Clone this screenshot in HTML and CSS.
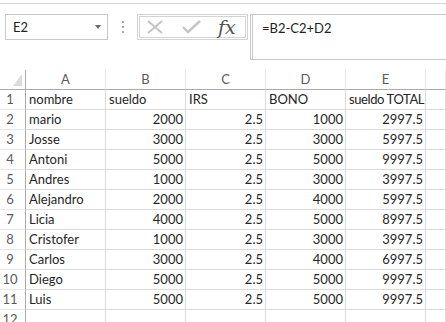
FILE: index.html
```html
<!DOCTYPE html>
<html lang="es">
<head>
  <meta charset="UTF-8">
  <title>Libro1 - sueldos</title>
  <link rel="stylesheet" href="styles.css">
</head>
<body>
  <div class="ribbon-edge"></div>

  <div class="formula-row">
    <div class="name-box">
      <span>E2</span>
      <span class="caret"></span>
    </div>
    <div class="grip"><i></i><i></i><i></i></div>
    <div class="fx-tools">
      <svg class="tool" width="18" height="14" viewBox="0 0 18 14">
        <path d="M2 1 L16 13 M16 1 L2 13" stroke="#c4c4c4" stroke-width="2" fill="none"/>
      </svg>
      <svg class="tool" width="19" height="14" viewBox="0 0 19 14">
        <path d="M1 7 L6 12 L18 1" stroke="#c4c4c4" stroke-width="2.4" fill="none"/>
      </svg>
      <span class="fx">fx</span>
    </div>
    <div class="formula-input">=B2-C2+D2</div>
  </div>

  <div class="sheet">
    <div class="corner"><span class="tri"></span></div>
    <div class="col-head">A</div>
    <div class="col-head">B</div>
    <div class="col-head">C</div>
    <div class="col-head">D</div>
    <div class="col-head">E</div>
    <div class="col-head"></div>

    <div class="row-head">1</div>
    <div class="cell">nombre</div><div class="cell">sueldo</div><div class="cell">IRS</div><div class="cell">BONO</div><div class="cell tight">sueldo TOTAL</div><div class="cell"></div>

    <div class="row-head">2</div>
    <div class="cell">mario</div><div class="cell num">2000</div><div class="cell num">2.5</div><div class="cell num">1000</div><div class="cell num">2997.5</div><div class="cell"></div>

    <div class="row-head">3</div>
    <div class="cell">Josse</div><div class="cell num">3000</div><div class="cell num">2.5</div><div class="cell num">3000</div><div class="cell num">5997.5</div><div class="cell"></div>

    <div class="row-head">4</div>
    <div class="cell">Antoni</div><div class="cell num">5000</div><div class="cell num">2.5</div><div class="cell num">5000</div><div class="cell num">9997.5</div><div class="cell"></div>

    <div class="row-head">5</div>
    <div class="cell">Andres</div><div class="cell num">1000</div><div class="cell num">2.5</div><div class="cell num">3000</div><div class="cell num">3997.5</div><div class="cell"></div>

    <div class="row-head">6</div>
    <div class="cell">Alejandro</div><div class="cell num">2000</div><div class="cell num">2.5</div><div class="cell num">4000</div><div class="cell num">5997.5</div><div class="cell"></div>

    <div class="row-head">7</div>
    <div class="cell">Licia</div><div class="cell num">4000</div><div class="cell num">2.5</div><div class="cell num">5000</div><div class="cell num">8997.5</div><div class="cell"></div>

    <div class="row-head">8</div>
    <div class="cell">Cristofer</div><div class="cell num">1000</div><div class="cell num">2.5</div><div class="cell num">3000</div><div class="cell num">3997.5</div><div class="cell"></div>

    <div class="row-head">9</div>
    <div class="cell">Carlos</div><div class="cell num">3000</div><div class="cell num">2.5</div><div class="cell num">4000</div><div class="cell num">6997.5</div><div class="cell"></div>

    <div class="row-head">10</div>
    <div class="cell">Diego</div><div class="cell num">5000</div><div class="cell num">2.5</div><div class="cell num">5000</div><div class="cell num">9997.5</div><div class="cell"></div>

    <div class="row-head">11</div>
    <div class="cell">Luis</div><div class="cell num">5000</div><div class="cell num">2.5</div><div class="cell num">5000</div><div class="cell num">9997.5</div><div class="cell"></div>

    <div class="row-head">12</div>
    <div class="cell"></div><div class="cell"></div><div class="cell"></div><div class="cell"></div><div class="cell"></div><div class="cell"></div>
  </div>
</body>
</html>
```

FILE: styles.css
```css
:root {
  --grid: #dadada;
  --head-line: #ababab;
  --head-text: #5a5a5a;
  --box-line: #c8c8c8;
  --cell-text: #262626;
}
html, body {
  margin: 0;
  width: 446px;
  height: 322px;
  overflow: hidden;
  background: #fff;
  font-family: Lato, 'Noto Sans', sans-serif;
  color: var(--cell-text);
}
.ribbon-edge {
  height: 3px;
  border-bottom: 1px solid #d6d6d6;
}
/* formula bar */
.formula-row {
  display: flex;
  align-items: flex-start;
  padding-top: 10px;
  height: 46px;
}
.name-box {
  box-sizing: border-box;
  margin-left: 5px;
  width: 103px;
  height: 26px;
  border: 1px solid var(--box-line);
  display: flex;
  align-items: center;
  justify-content: space-between;
  padding: 0 6px 0 7px;
  font-size: 13px;
  color: #222;
}
.caret {
  width: 0;
  height: 0;
  border-left: 3.5px solid transparent;
  border-right: 3.5px solid transparent;
  border-top: 4px solid #6a6a6a;
}
.grip {
  width: 29px;
  height: 26px;
  display: flex;
  flex-direction: column;
  align-items: center;
  justify-content: center;
  gap: 3px;
}
.grip i {
  width: 2px;
  height: 2px;
  background: #a8a8a8;
}
.fx-tools {
  box-sizing: border-box;
  width: 111px;
  height: 26px;
  border: 3px double #d3d3d3;
  display: flex;
  align-items: center;
  padding-left: 6px;
  gap: 18px;
}
.fx {
  font-family: 'DejaVu Serif', 'Liberation Serif', serif;
  font-style: italic;
  font-size: 19px;
  color: #505050;
  margin-left: -1px;
  line-height: 1;
}
.formula-input {
  box-sizing: border-box;
  flex: 1;
  margin-left: 2px;
  height: 46px;
  border-left: 3px double var(--box-line);
  border-top: 1px solid var(--box-line);
  border-bottom: 1px solid var(--box-line);
  padding: 5px 0 0 9px;
  font-size: 13px;
  color: #222;
}
/* worksheet */
.sheet {
  margin-top: 10px;
  display: grid;
  grid-template-columns: 26px repeat(5, 80px) 20px;
  grid-auto-rows: 20px;
  font-size: 13px;
}
.sheet > div {
  box-sizing: border-box;
  border-right: 1px solid var(--grid);
  border-bottom: 1px solid var(--grid);
  line-height: 19px;
  white-space: nowrap;
  overflow: hidden;
}
.cell {
  padding: 0 2px 0 3px;
}
.cell.num {
  text-align: right;
}
.cell.tight {
  padding-left: 3px;
  padding-right: 0;
  letter-spacing: -0.4px;
}
.corner {
  position: relative;
  border-right-color: var(--head-line) !important;
  border-bottom-color: var(--head-line) !important;
}
.tri {
  position: absolute;
  right: 3px;
  bottom: 3px;
  width: 0;
  height: 0;
  border-left: 9px solid transparent;
  border-bottom: 12px solid #dcdcdc;
}
.col-head {
  text-align: center;
  color: var(--head-text);
  border-right-color: #e6e6e6 !important;
  border-bottom-color: var(--head-line) !important;
}
.row-head {
  text-align: center;
  padding-right: 5px;
  color: var(--head-text);
  border-right-color: var(--head-line) !important;
  border-bottom-color: #e6e6e6 !important;
}
```
